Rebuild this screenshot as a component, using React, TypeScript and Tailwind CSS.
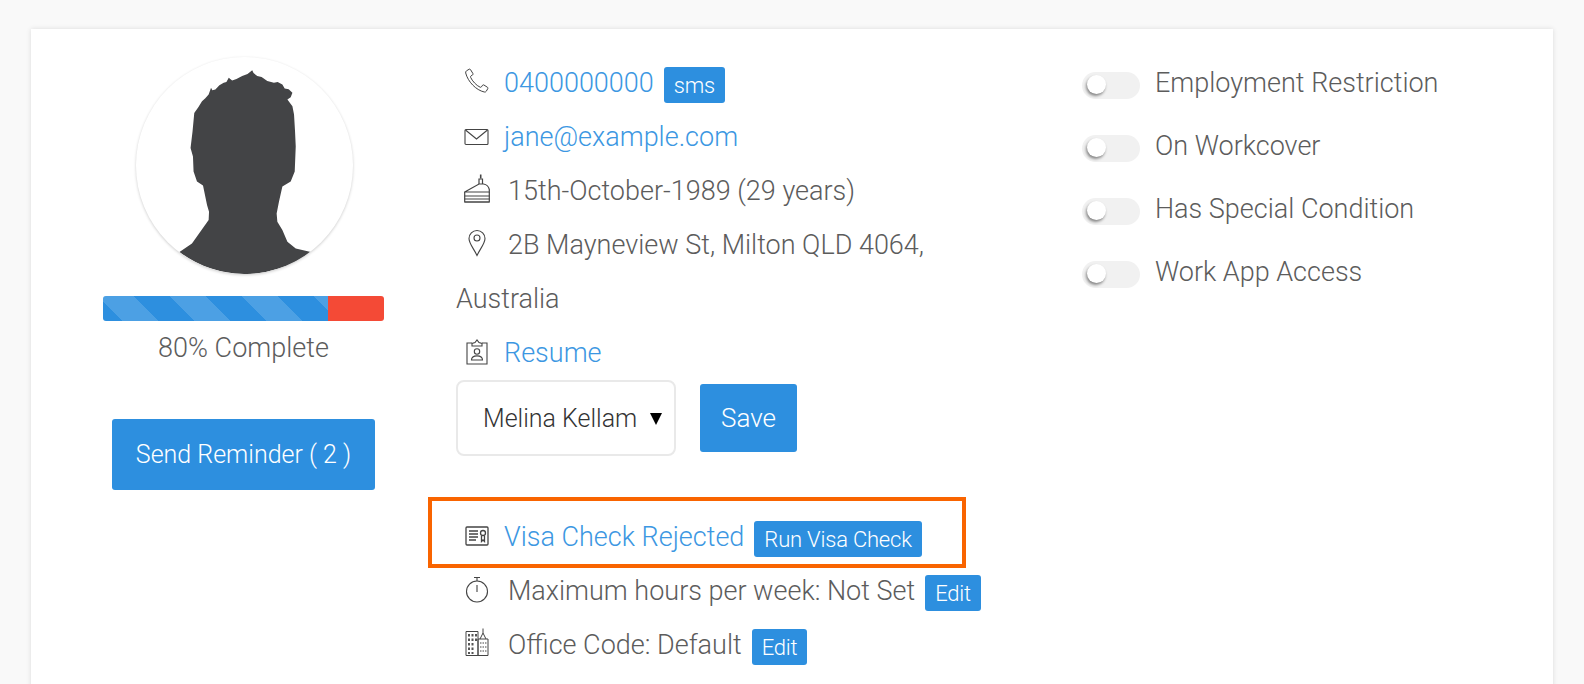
import React from 'react';

const font = { fontFamily: 'Roboto, sans-serif' };

function PhoneIcon() {
  return (
    <svg width="26" height="26" viewBox="0 0 26 26" fill="none" stroke="#444" strokeWidth="1">
      <path d="M2.5 2.8 5.2 1.2c.5-.3 1-.1 1.3.4l2.4 3.9c.3.5.2 1-.2 1.3L6.9 8c-.4.3-.5.8-.3 1.3 1.600 3.700 5.800 8.200 9.500 9.900.5.2 1 .1 1.300-.3l1.200-1.700c.3-.4.900-.5 1.300-.2l3.600 2.300c.5.300.6.900.3 1.300l-1.500 2.600c-.4.700-1.200 1-2 .8C12 22.200 3.800 13.500 1.700 5c-.2-.8.100-1.700.8-2.200Z" />
    </svg>
  );
}

function MailIcon() {
  return (
    <svg width="26" height="18" viewBox="0 0 26 18" fill="none" stroke="#444" strokeWidth="1.1">
      <rect x="1" y="1.500" width="23" height="15" rx="1" />
      <path d="M1.500 2 12.500 11l11-9" />
    </svg>
  );
}

function CakeIcon() {
  return (
    <svg width="26" height="29" viewBox="0 0 26 29" fill="none" stroke="#444" strokeWidth="1.200">
      <path d="M0.700 18 15 10h4.500c3 .5 5 2 5.800 5.500V18Z" />
      <path d="M0.700 18v10h24.600V18" />
      <path d="M0.700 22h24.600M0.700 25h24.600M0.700 28h24.600" />
      <path d="M15 10V5h3.500v5" />
      <path d="M16.700 0.500v4" strokeWidth="1.600" />
    </svg>
  );
}

function PinIcon() {
  return (
    <svg width="20" height="28" viewBox="0 0 20 28" fill="none" stroke="#444" strokeWidth="1.100">
      <path d="M10 26.500C7 20 2 14.500 2 9.500a8 8 0 0 1 16 0C18 14.500 13 20 10 26.500Z" />
      <circle cx="10" cy="9" r="3" />
    </svg>
  );
}

function BadgeIcon() {
  return (
    <svg width="22" height="26" viewBox="0 0 22 26" fill="none" stroke="#444" strokeWidth="1.100">
      <path d="M6 4H1v21h20V4h-5" />
      <path d="M6 7V4.500l3-1L11 1l2 2.500 3 1V7Z" />
      <circle cx="11" cy="12.500" r="2.700" />
      <path d="M5.500 21c0-5.500 11-5.500 11 0Z" />
    </svg>
  );
}

function VisaIcon() {
  return (
    <svg width="24" height="20" viewBox="0 0 24 20" fill="none" stroke="#444" strokeWidth="1.300">
      <rect x="1" y="1" width="22" height="18" rx="1" />
      <path d="M4 5h9M4 8h9M4 11h9M4 14h7" />
      <circle cx="18" cy="7" r="2.500" />
      <path d="M16.500 9.500V15.500l1.500-1.500 1.500 1.500V9.500" />
    </svg>
  );
}

function TimerIcon() {
  return (
    <svg width="24" height="28" viewBox="0 0 24 28" fill="none" stroke="#444" strokeWidth="1.100">
      <circle cx="12" cy="15.500" r="10.500" />
      <path d="M9 1.500h6M12 1.500V5M12 9v7" />
    </svg>
  );
}

function OfficeIcon() {
  return (
    <svg width="24" height="28" viewBox="0 0 24 28" fill="none" stroke="#444" strokeWidth="1">
      <path d="M1 27.500V3.500h12v24Z" />
      <path d="M13 27.500V11h10v16.500Z" />
      <path d="M15 11l3-6 3 6M18 5V0.500" />
      <path fill="#555" stroke="none" d="M3 6h2v2.500H3ZM6.500 6h2v2.500h-2ZM10 6h2v2.500h-2ZM3 10.500h2V13H3ZM6.500 10.500h2V13h-2ZM10 10.500h2V13h-2ZM3 15h2v2.500H3ZM6.500 15h2v2.500h-2ZM3 19.500h2V22H3ZM6.500 19.500h2V22h-2ZM3 24h2v2H3ZM6.500 24h2v2h-2Z" />
      <path d="M15 15h6.500M15 19h6.500M15 23h6.500" strokeDasharray="1.500 1" />
    </svg>
  );
}

function Avatar() {
  return (
    <div className="w-[217px] h-[217px] rounded-full bg-white overflow-hidden shadow-[0_1px_3px_rgba(0,0,0,0.2)]">
      <svg width="217" height="217" viewBox="0 0 216 216">
        <path
          fill="#434446"
          d="M43.300 194 55.700 185.700 64 174 72.300 162.300 72.700 154 70.700 147.300 66.700 128 60.700 124 57.300 114 56.700 99 54.300 90.700 56.300 74 58 55.700 62 50 65.700 44 69 41 72.300 37.300 74.700 30.700 76 33 79 32.300 83 28 87.300 25.700 90 25 92.300 20.700 95.700 23.300 100 22 105.700 19 111 17 115.700 13.300 117 16 120.700 19 125 20 130.700 24 137.300 25.700 141 25 145.700 27.300 148 31.300 152 32 155.700 35.700 154 40 150.700 42.300 155.700 49 157.300 57.300 158.300 74 159 89 158 114 154 124 145.700 129 142.300 144 140 155.700 140.700 164 145.700 172.300 150.700 184 159 190.700 174 194 A108 108 0 0 1 43.300 194 Z"
        />
      </svg>
    </div>
  );
}

function ProgressBar() {
  return (
    <div className="flex w-[281px] h-[25px] rounded-[3px] overflow-hidden">
      <div className="w-[225px] bg-[#2d8fdf] bg-[linear-gradient(45deg,transparent_25%,rgba(255,255,255,0.15)_25%,rgba(255,255,255,0.15)_50%,transparent_50%,transparent_75%,rgba(255,255,255,0.15)_75%)] bg-[length:72px_72px] bg-[position:-42px_0]" />
      <div className="flex-1 bg-[#f44a36]" />
    </div>
  );
}

function Row({ icon, children, textGap = 'gap-3', iconClass = 'mb-[2px]' }: { icon: React.ReactNode; children: React.ReactNode; textGap?: string; iconClass?: string }) {
  return (
    <div className={`flex items-center h-[54px] pl-[6px] ${textGap}`}>
      <div className={`w-[30px] flex justify-center shrink-0 ${iconClass}`}>{icon}</div>
      {children}
    </div>
  );
}

function SmallBtn({ children, className = '' }: { children: React.ReactNode; className?: string }) {
  return (
    <span className={`inline-flex items-center h-[36px] px-[10px] mt-[4px] bg-[#2d8fdf] text-white text-[22px] font-light tracking-[-0.2px] rounded-[3px] ${className}`}>
      {children}
    </span>
  );
}

function Toggle({ label }: { label: string }) {
  return (
    <div className="flex items-center h-[63px] gap-[15px]">
      <div className="relative w-[58px] h-[27px] mt-[4px] rounded-full bg-[#f1f1f1]">
        <div className="absolute left-[5px] top-[3px] w-[19px] h-[19px] rounded-full bg-white shadow-[-1px_2px_3px_rgba(0,0,0,0.45)]" />
      </div>
      <span className="text-[27px] font-light text-[#5c5c5c]">{label}</span>
    </div>
  );
}

export default function App() {
  return (
    <div className="h-[684px] overflow-hidden bg-[#f9f9f9] pt-[29px] px-[31px]" style={font}>
      <div className="flex h-[700px] bg-white shadow-[0_0_5px_rgba(0,0,0,0.12)]">
        <div className="w-[426px] shrink-0 flex flex-col items-center pt-[28px]">
          <Avatar />
          <div className="mt-[22px] -ml-[1px]"><ProgressBar /></div>
          <div className="mt-[9px] -ml-[1px] text-[27px] leading-[36px] font-light text-[#5c5c5c]">80% Complete</div>
          <button className="mt-[53px] -ml-[1px] w-[263px] h-[71px] pt-[1px] bg-[#2d8fdf] text-white text-[25px] font-light rounded-[3px]">Send Reminder ( 2 )</button>
        </div>
        <div className="w-[626px] -ml-[1px] shrink-0 pt-[27px] text-[27px] font-light text-[#5c5c5c]">
          <Row icon={<PhoneIcon />} iconClass="mb-[4px]">
            <a className="text-[#3c97e2]">0400000000</a>
            <SmallBtn className="-ml-[2px]">sms</SmallBtn>
          </Row>
          <Row icon={<MailIcon />} iconClass="mb-0"><a className="text-[#3c97e2]">jane@example.com</a></Row>
          <Row icon={<CakeIcon />} textGap="gap-4" iconClass="mb-[6px]">15th-October-1989 (29 years)</Row>
          <Row icon={<PinIcon />} textGap="gap-4" iconClass="mb-[4px]">2B Mayneview St, Milton QLD 4064,</Row>
          <div className="h-[54px] leading-[54px]">Australia</div>
          <Row icon={<BadgeIcon />}><a className="text-[#3c97e2]">Resume</a></Row>
          <div className="flex items-center gap-[24px] h-[76px]">
            <div className="flex items-center justify-between w-[220px] h-[76px] pl-[25px] pr-[12px] pt-[2px] border-2 border-[#e9e9e9] rounded-[8px] text-[25px] text-[#333]">
              Melina Kellam
              <span className="w-0 h-0 border-x-[6px] border-x-transparent border-t-[12px] border-t-black" />
            </div>
            <button className="w-[97px] h-[68px] pt-[1px] bg-[#2d8fdf] text-white text-[26px] font-light rounded-[3px]">Save</button>
          </div>
          <div className="relative mt-[54px]">
            <div className="absolute left-[-28px] top-[-13px] w-[538px] h-[71px] border-[4px] border-[#f96400]" />
            <Row icon={<VisaIcon />}>
              <a className="text-[#3c97e2]">Visa Check Rejected</a>
              <SmallBtn className="-ml-[2px]">Run Visa Check</SmallBtn>
            </Row>
          </div>
          <Row icon={<TimerIcon />} textGap="gap-4">
            Maximum hours per week: Not Set
            <SmallBtn className="-ml-[6px]">Edit</SmallBtn>
          </Row>
          <Row icon={<OfficeIcon />} textGap="gap-4" iconClass="mb-[6px]">
            Office Code: Default
            <SmallBtn className="-ml-[6px]">Edit</SmallBtn>
          </Row>
        </div>
        <div className="pt-[23px]">
          <Toggle label="Employment Restriction" />
          <Toggle label="On Workcover" />
          <Toggle label="Has Special Condition" />
          <Toggle label="Work App Access" />
        </div>
      </div>
    </div>
  );
}
